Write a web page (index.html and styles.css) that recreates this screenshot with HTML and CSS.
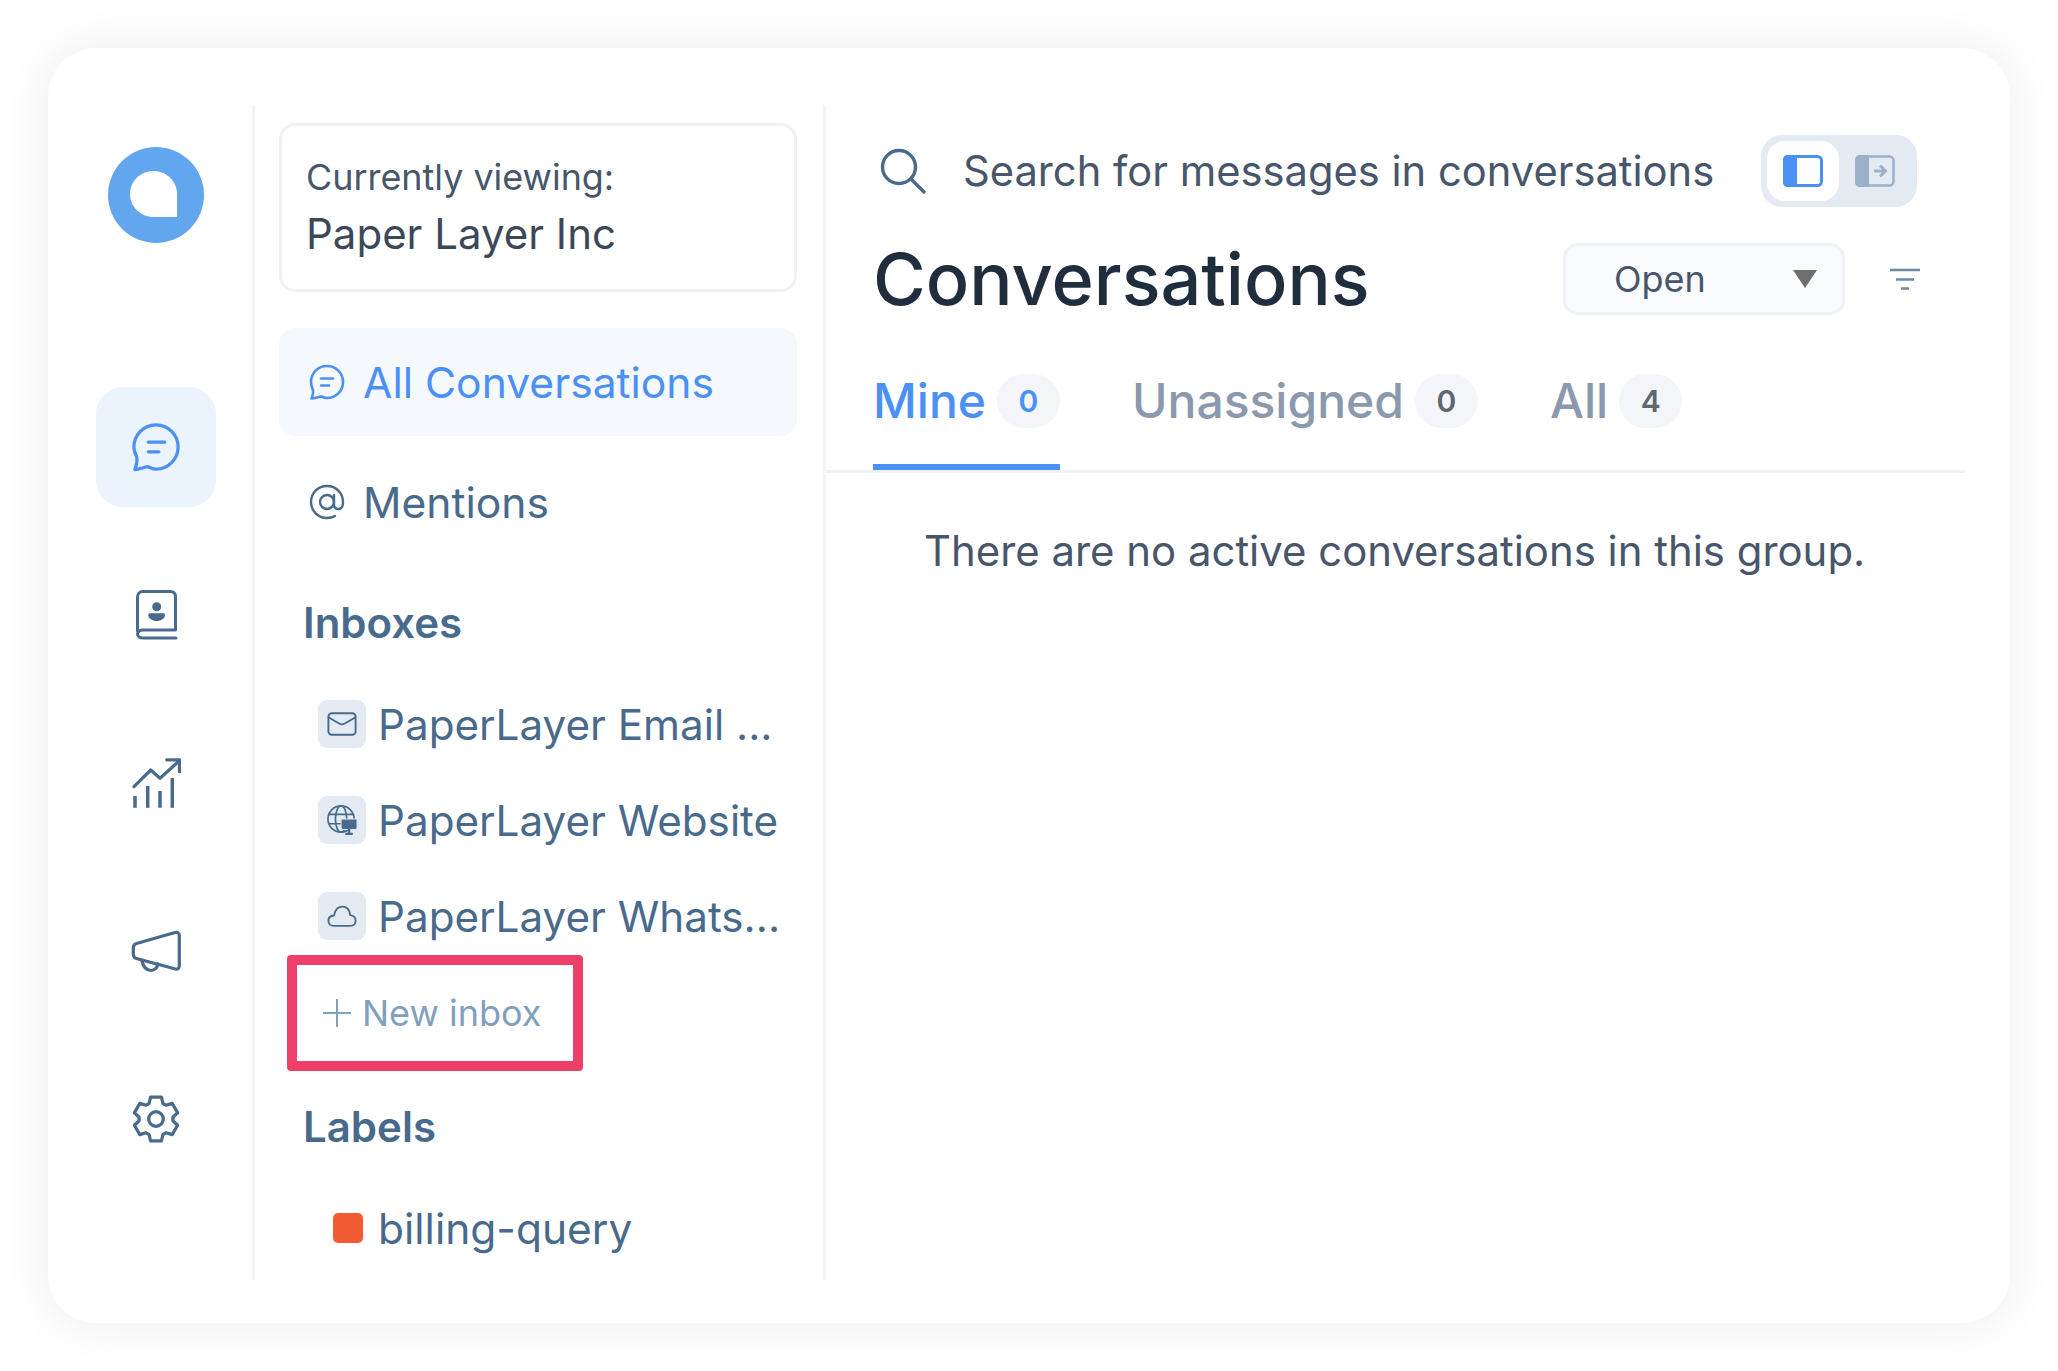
FILE: index.html
```html
<!DOCTYPE html>
<html lang="en">
<head>
  <meta charset="UTF-8">
  <meta name="viewport" content="width=device-width, initial-scale=1.0">
  <title>Conversations</title>
  <link rel="stylesheet" href="styles.css">
</head>
<body>
  <div class="card">

    <!-- Icon rail -->
    <nav class="rail">
      <svg class="logo" viewBox="0 0 96 96">
        <circle cx="48" cy="48" r="48" fill="#63a6f0"/>
        <path d="M45.500 24C32.500 24 22 34.300 22 47C22 59.700 32.500 70 45.500 70H69V47C69 34.300 58.500 24 45.500 24Z" fill="#fff"/>
      </svg>
      <a class="rail-item active">
        <svg class="rail-icon" viewBox="0 0 52 52" fill="none" stroke="#4a90f5" stroke-width="3.400" stroke-linecap="round" stroke-linejoin="round">
          <path d="M26 3C38.700 3 49 13.300 49 26C49 38.700 38.700 49 26 49C22 49 19.500 47.300 18 46.500C14 46.500 9 49.500 4 49.500C6 44 7 40 5.800 36C4 32.500 3 29.500 3 26C3 13.300 13.300 3 26 3Z"/>
          <path d="M18 21H35M18 31H29"/>
        </svg>
      </a>
      <a class="rail-item">
        <svg class="rail-icon" viewBox="0 0 50 50" fill="none" stroke="#486a8c" stroke-width="3" stroke-linecap="round" stroke-linejoin="round">
          <path d="M6.500 41V7C6.500 4 8.500 1.500 11.500 1.500H39.500C42.500 1.500 44.500 3.500 44.500 6.500V40H12C9 40 6.500 41.500 6.500 44C6.500 46.500 9 48 12 48H45"/>
          <circle cx="25.700" cy="16.700" r="4.500" fill="#486a8c" stroke="none"/>
          <path d="M17.300 25C17.300 23.800 18 23.300 19 23.300H32.300C33.300 23.300 34 23.800 34 25C34 28.500 30 31 25.700 31C21.300 31 17.300 28.500 17.300 25Z" fill="#486a8c" stroke="none"/>
        </svg>
      </a>
      <a class="rail-item">
        <svg class="rail-icon" viewBox="0 0 50 50" fill="none" stroke="#486a8c" stroke-width="3.200" stroke-linecap="round" stroke-linejoin="round">
          <path d="M3 28.700L19.700 12L29 20.300L48 3M35.700 1.800H48.500V13.700"/>
          <path d="M4 38V49.700M16.700 28V49.700M29 33V49.700M41.300 20V49.700" stroke-width="3.500" stroke-linecap="butt"/>
        </svg>
      </a>
      <a class="rail-item">
        <svg class="rail-icon" viewBox="0 0 50 50" fill="none" stroke="#486a8c" stroke-width="3.200" stroke-linecap="round" stroke-linejoin="round">
          <path d="M44 6.500C46.500 5.800 48.300 7 48.300 9.500V40C48.300 42.500 46.500 43.500 44.500 43L5.500 32.500C3.500 32 2.300 30 2.300 28V22C2.300 20 3.500 18 5.500 17.500Z"/>
          <path d="M11 35C12 41 16 44.500 20 44.500C23 44.500 26 42 27 38"/>
        </svg>
      </a>
      <a class="rail-item">
        <svg class="rail-icon" viewBox="0 0 50 50" fill="none" stroke="#486a8c" stroke-width="3.200" stroke-linejoin="round">
          <circle cx="25" cy="25" r="7.300"/>
          <path d="M18.100 9.500L19.560 3.170H30.440L31.900 9.500A17 17 0 0 1 34.970 11.270L41.180 9.370L46.620 18.790L41.870 23.230A17 17 0 0 1 41.870 26.770L46.620 31.210L41.180 40.630L34.970 38.730A17 17 0 0 1 31.900 40.500L30.440 46.830H19.560L18.100 40.500A17 17 0 0 1 15.030 38.730L8.820 40.630L3.380 31.210L8.130 26.770A17 17 0 0 1 8.130 23.230L3.380 18.790L8.820 9.370L15.030 11.270A17 17 0 0 1 18.100 9.500Z"/>
        </svg>
      </a>
    </nav>

    <!-- Inbox sidebar -->
    <aside class="panel">
      <div class="account">
        <div class="account-label">Currently viewing:</div>
        <div class="account-name">Paper Layer Inc</div>
      </div>

      <a class="nav-row selected">
        <svg class="nav-icon" viewBox="0 0 36 36" fill="none" stroke="#4a90f5" stroke-width="2.600" stroke-linecap="round" stroke-linejoin="round">
          <path d="M18 2C27 2 34 9 34 18C34 27 27 34 18 34C15.500 34 13.500 33 12.500 32.500C9.500 32.500 6 34.500 2.500 34.500C4 31 4.800 28.500 3.800 25.500C2.600 23 2 20.800 2 18C2 9 9 2 18 2Z"/>
          <path d="M12 14.500H24M12 21.500H20"/>
        </svg>
        <span>All Conversations</span>
      </a>
      <a class="nav-row">
        <svg class="nav-icon" viewBox="0 0 36 36" fill="none" stroke="#486a8c" stroke-width="2.400" stroke-linecap="round" stroke-linejoin="round">
          <circle cx="18" cy="18" r="7"/>
          <path d="M25 11V20.500C25 23.500 27 25 29.500 25C32.500 25 34 22 34 18C34 9 27 2 18 2C9 2 2 9 2 18C2 27 9 34 18 34C21 34 23.500 33.500 26 32"/>
        </svg>
        <span>Mentions</span>
      </a>

      <h3 class="group-title inboxes-title">Inboxes</h3>
      <ul class="inbox-list">
        <li class="inbox">
          <span class="inbox-icon">
            <svg viewBox="0 0 32 26" fill="none" stroke="#486a8c" stroke-width="2" stroke-linecap="round" stroke-linejoin="round">
              <rect x="1.500" y="1.500" width="29" height="23" rx="3.500"/>
              <path d="M2 6L13 12.500C15 13.700 17 13.700 19 12.500L30 6"/>
            </svg>
          </span>
          <span>PaperLayer Email ...</span>
        </li>
        <li class="inbox">
          <span class="inbox-icon">
            <svg viewBox="0 0 32 32" fill="none" stroke="#486a8c" stroke-width="1.800">
              <circle cx="15" cy="15" r="14"/>
              <ellipse cx="15" cy="15" rx="6" ry="14"/>
              <path d="M2 10H28M2 20H16"/>
              <rect x="15" y="15" width="17" height="11" rx="1.500" fill="#486a8c" stroke="#e4eaf1" stroke-width="1"/>
              <path d="M23.500 25V31M19.500 31H27.500" stroke-width="2.600"/>
            </svg>
          </span>
          <span>PaperLayer Website</span>
        </li>
        <li class="inbox">
          <span class="inbox-icon">
            <svg viewBox="0 0 32 24" fill="none" stroke="#486a8c" stroke-width="2" stroke-linecap="round" stroke-linejoin="round">
              <path d="M7 22.500C3.500 22.500 1.500 20 1.500 17C1.500 14 3.500 11.800 7.500 11.500C8.500 5.500 12 2 16.500 2C21 2 24 5.500 24.800 11C28.500 11.500 30.500 14 30.500 17C30.500 20 28.500 22.500 25 22.500Z"/>
            </svg>
          </span>
          <span>PaperLayer Whats...</span>
        </li>
      </ul>

      <a class="new-inbox">
        <svg class="plus" viewBox="0 0 28 28" fill="none" stroke="#81a0c0" stroke-width="2">
          <path d="M14 0V28M0 14H28"/>
        </svg>
        <span>New inbox</span>
      </a>

      <h3 class="group-title labels-title">Labels</h3>
      <div class="label-row">
        <span class="label-dot"></span>
        <span>billing-query</span>
      </div>
    </aside>

    <!-- Conversation list -->
    <main class="main">
      <div class="search-row">
        <svg class="search-icon" viewBox="0 0 46 46" fill="none" stroke="#486a8c" stroke-width="3.400" stroke-linecap="round">
          <circle cx="19" cy="19" r="16.500"/>
          <path d="M31 31L44 44"/>
        </svg>
        <span class="search-text">Search for messages in conversations</span>
        <div class="toggle">
          <span class="toggle-btn on">
            <svg viewBox="0 0 40 32" width="40" height="32">
              <rect x="1.500" y="1.500" width="37" height="29" rx="4" fill="#fff" stroke="#4a90f5" stroke-width="3"/>
              <path d="M5 0H14V32H5C2 32 0 30 0 27V5C0 2 2 0 5 0Z" fill="#4a90f5"/>
            </svg>
          </span>
          <span class="toggle-btn">
            <svg viewBox="0 0 40 32" width="40" height="32" fill="none">
              <rect x="1.500" y="1.500" width="37" height="29" rx="4" stroke="#9bb0c9" stroke-width="2.400"/>
              <path d="M5 0H14V32H5C2 32 0 30 0 27V5C0 2 2 0 5 0Z" fill="#9bb0c9"/>
              <path d="M19 16H30M25 10.500L30.500 16L25 21.500" stroke="#9bb0c9" stroke-width="2.800"/>
            </svg>
          </span>
        </div>
      </div>

      <div class="head-row">
        <h1 class="title">Conversations</h1>
        <div class="status-select">
          <span>Open</span>
          <span class="caret"></span>
        </div>
        <svg class="filter-icon" viewBox="0 0 30 22" fill="none" stroke="#6d87a5" stroke-width="2.400">
          <path d="M0 2H30M6 11.500H24M11 20.500H19"/>
        </svg>
      </div>

      <div class="tabs">
        <a class="tab current">Mine <span class="count">0</span></a>
        <a class="tab">Unassigned <span class="count">0</span></a>
        <a class="tab">All <span class="count">4</span></a>
      </div>

      <p class="empty">There are no active conversations in this group.</p>
    </main>
  </div>
</body>
</html>
```

FILE: styles.css
```css
* {
  box-sizing: border-box;
}

html, body {
  margin: 0;
  padding: 0;
  height: 100%;
  overflow: hidden;
  background-color: #fff;
}

body {
  padding: 48px;
  font-family: Inter, "Noto Sans", sans-serif;
  color: #3c4858;
}

.card {
  display: flex;
  height: 1275px;
  padding: 57px 45px 43px 0;
  background-color: #fff;
  border-radius: 48px;
  box-shadow: 0 0 48px rgba(0, 0, 0, 0.08);
}

/* Icon rail */
.rail {
  display: flex;
  flex-direction: column;
  align-items: center;
  flex: 0 0 207px;
  padding: 42px 36px 0 48px;
  border-right: 3px solid #f1f4f8;
}

.logo {
  width: 96px;
  height: 96px;
  flex: none;
  margin-bottom: 144px;
}

.rail-item {
  display: flex;
  align-items: center;
  justify-content: center;
  width: 120px;
  height: 120px;
  flex: none;
  margin-bottom: 48px;
  border-radius: 27px;
}

.rail-item.active {
  background-color: #ebf3fd;
}

.rail-icon {
  width: 50px;
  height: 50px;
}

/* Inbox sidebar */
.panel {
  flex: 0 0 571px;
  padding: 18px 26px 0 24px;
  border-right: 3px solid #f1f4f8;
  color: #486a8c;
  font-size: 42px;
}

.account {
  height: 169px;
  padding: 27px 24px 0;
  border: 3px solid #eef2f6;
  border-radius: 16px;
}

.account-label {
  font-size: 35.900px;
  line-height: 48px;
  color: #47566b;
}

.account-name {
  margin-top: 7px;
  font-size: 42px;
  line-height: 52px;
  color: #3c4858;
}

.nav-row {
  display: flex;
  align-items: center;
  gap: 18px;
  height: 108px;
  padding-left: 30px;
  font-size: 42.600px;
}

.nav-row.selected {
  margin-top: 36px;
  margin-bottom: 12px;
  background-color: #f5f9fe;
  border-radius: 16px;
  color: #4a90f5;
}

.nav-icon {
  width: 36px;
  height: 36px;
  flex: none;
}

.group-title {
  margin: 0;
  padding-left: 24px;
  font-size: 42px;
  font-weight: 600;
  line-height: 52px;
}

.inboxes-title {
  margin-top: 41px;
}

.inbox-list {
  margin: 51px 0 0;
  padding: 0;
  list-style: none;
  font-size: 42.200px;
}

.inbox {
  display: flex;
  align-items: center;
  gap: 12px;
  height: 48px;
  margin-bottom: 48px;
  margin-left: 39px;
  white-space: nowrap;
}

.inbox-icon {
  display: flex;
  align-items: center;
  justify-content: center;
  width: 48px;
  height: 48px;
  flex: none;
  background-color: #e4eaf1;
  border-radius: 9px;
}

.inbox-icon svg {
  width: 30px;
  height: 30px;
}

.new-inbox {
  display: flex;
  align-items: center;
  gap: 11px;
  width: 296px;
  height: 116px;
  margin: -33px 0 0 8px;
  padding-left: 26px;
  border: 10px solid #ec4069;
  border-radius: 4px;
  color: #81a0c0;
  font-size: 36px;
}

.plus {
  width: 28px;
  height: 28px;
  flex: none;
}

.labels-title {
  margin-top: 30px;
}

.label-row {
  display: flex;
  align-items: center;
  gap: 15px;
  height: 48px;
  margin: 51px 0 0 54px;
  font-size: 42.500px;
}

.label-dot {
  width: 30px;
  height: 30px;
  flex: none;
  background-color: #f15c33;
  border-radius: 5px;
}

/* Conversation list */
.main {
  flex: 1;
  min-width: 0;
  padding-top: 30px;
}

.search-row {
  display: flex;
  align-items: center;
  height: 72px;
  padding-left: 54px;
}

.search-icon {
  width: 46px;
  height: 46px;
  flex: none;
}

.search-text {
  flex: 1;
  margin-left: 37px;
  padding-bottom: 1px;
  font-size: 41.700px;
  color: #47566b;
  white-space: nowrap;
}

.toggle {
  display: flex;
  width: 156px;
  height: 72px;
  margin-right: 48px;
  padding: 6px;
  background-color: #e4eaf1;
  border-radius: 21px;
}

.toggle-btn {
  display: flex;
  align-items: center;
  justify-content: center;
  width: 72px;
  height: 60px;
}

.toggle-btn.on {
  background-color: #fff;
  border-radius: 18px;
}

.head-row {
  display: flex;
  align-items: center;
  height: 72px;
  margin-top: 36px;
  padding-left: 47px;
}

.title {
  flex: 1;
  margin: 0;
  padding-bottom: 2px;
  font-size: 72px;
  font-weight: 500;
  color: #1f2d3d;
}

.status-select {
  display: flex;
  align-items: center;
  justify-content: space-between;
  width: 282px;
  height: 72px;
  padding: 0 25px 0 48px;
  background-color: #f8fafc;
  border: 3px solid #eef2f6;
  border-radius: 15px;
  font-size: 36px;
  color: #47566b;
}

.caret {
  width: 0;
  height: 0;
  border-left: 12px solid transparent;
  border-right: 12px solid transparent;
  border-top: 18px solid #6e6e6e;
}

.filter-icon {
  width: 30px;
  height: 22px;
  margin: 0 45px 0 45px;
  flex: none;
}

.tabs {
  display: flex;
  height: 116px;
  margin-top: 42px;
  padding-left: 47px;
  border-bottom: 3px solid #eef2f6;
}

.tab {
  display: flex;
  align-items: flex-start;
  gap: 11px;
  height: 113px;
  margin-right: 72px;
  padding-top: 17px;
  font-size: 48px;
  font-weight: 500;
  line-height: 54px;
  color: #8a99ad;
}

.tab.current {
  color: #4a90f5;
  border-bottom: 6px solid #4a90f5;
}

.count {
  display: flex;
  align-items: center;
  justify-content: center;
  width: 63px;
  height: 54px;
  background-color: #f3f5f8;
  border-radius: 27px;
  font-size: 30px;
  font-weight: 600;
  color: #5f6670;
}

.tab.current .count {
  color: #4a90f5;
}

.empty {
  margin: 52px 0 0 98px;
  font-size: 41.900px;
  line-height: 52px;
  color: #47566b;
  white-space: nowrap;
}
```
